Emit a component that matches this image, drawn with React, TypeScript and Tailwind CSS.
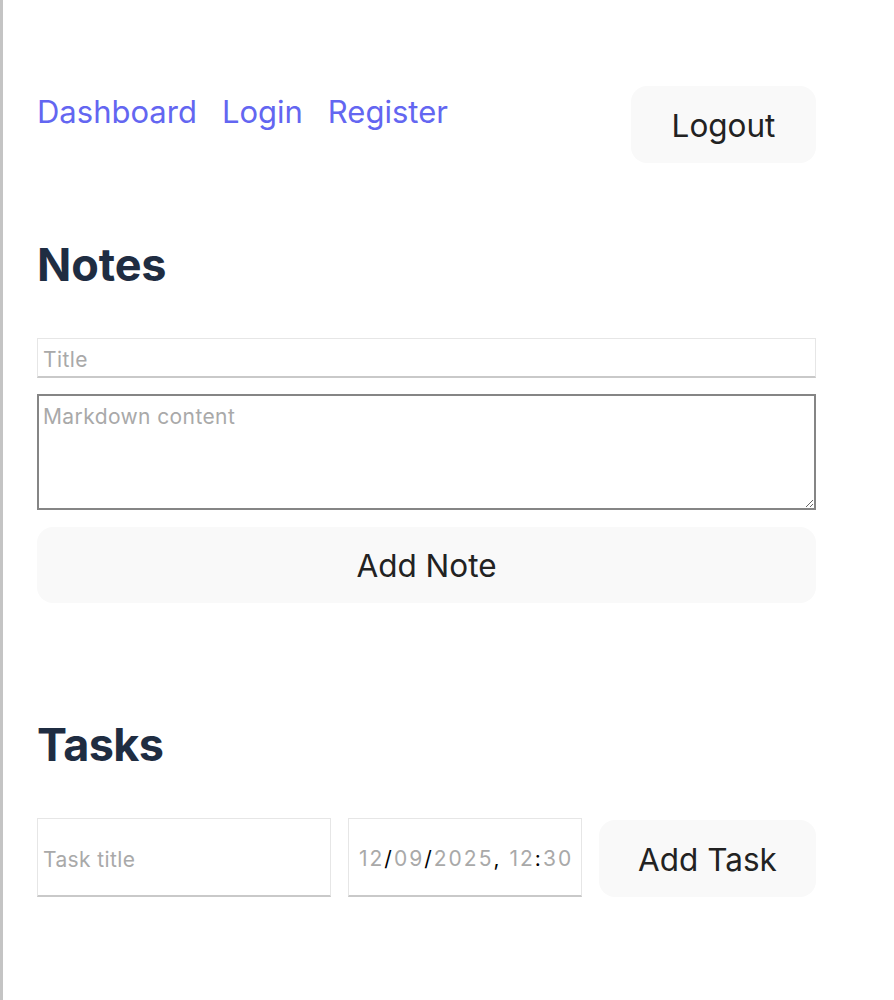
import React from "react";

export default function App() {
  const font = { fontFamily: "Inter, 'Noto Sans', sans-serif" };
  return (
    <div
      className="min-h-[1000px] bg-white border-l-[3px] border-[#c4c4c4]"
      style={font}
    >
      <div className="ml-[34px] w-[779px]">
        <header className="flex justify-between items-start pt-[86px]">
          <nav className="flex gap-[25px] pt-[7px] text-[31px] leading-[37px] text-[#6366f1]">
            <a href="#">Dashboard</a>
            <a href="#">Login</a>
            <a href="#">Register</a>
          </nav>
          <button className="w-[185px] h-[77px] pt-[3px] rounded-[16px] bg-[#f9f9f9] text-[#222] text-[31.5px]">
            Logout
          </button>
        </header>

        <h2 className="mt-[75px] text-[45px] leading-[53px] font-bold text-[#1f2d42] tracking-[-0.1px]">
          Notes
        </h2>

        <div className="mt-[47px] flex flex-col">
          <input
            placeholder="Title"
            className="h-[40px] px-[5px] pt-[3px] text-[21px] tracking-[0.4px] border border-[#e6e6e6] border-b-[2px] border-b-[#c9c9c9] placeholder:text-[#a9a9a9] outline-none"
          />
          <textarea
            placeholder="Markdown content"
            className="mt-[16px] h-[116px] px-[4px] py-[5px] text-[21px] tracking-[0.4px] border-2 border-[#858585] placeholder:text-[#a9a9a9] outline-none"
          />
          <button className="mt-[17px] h-[76px] pt-[2px] rounded-[16px] bg-[#f9f9f9] text-[#222] text-[31.5px]">
            Add Note
          </button>
        </div>

        <h2 className="mt-[115px] text-[45px] leading-[53px] font-bold text-[#1f2d42] tracking-[-0.6px]">
          Tasks
        </h2>

        <div className="mt-[47px] flex items-start">
          <input
            placeholder="Task title"
            className="w-[294px] h-[79px] px-[5px] pt-[4px] text-[21px] tracking-[0.4px] border border-[#e6e6e6] border-b-[2px] border-b-[#c9c9c9] placeholder:text-[#a9a9a9] outline-none"
          />
          <div className="ml-[17px] w-[234px] h-[79px] flex items-center pl-[10px] pt-[4px] text-[21px] tracking-[2px] border border-[#e6e6e6] border-b-[2px] border-b-[#c9c9c9] text-[#a9a9a9]">
            <span>12</span>
            <span className="text-black">/</span>
            <span>09</span>
            <span className="text-black">/</span>
            <span>2025</span>
            <span className="text-black">,</span>
            <span className="ml-[8px]">12</span>
            <span className="text-black">:</span>
            <span>30</span>
          </div>
          <button className="ml-[17px] mt-[2px] w-[217px] h-[77px] pt-[2px] rounded-[16px] bg-[#f9f9f9] text-[#222] text-[31.5px]">
            Add Task
          </button>
        </div>
      </div>
    </div>
  );
}
